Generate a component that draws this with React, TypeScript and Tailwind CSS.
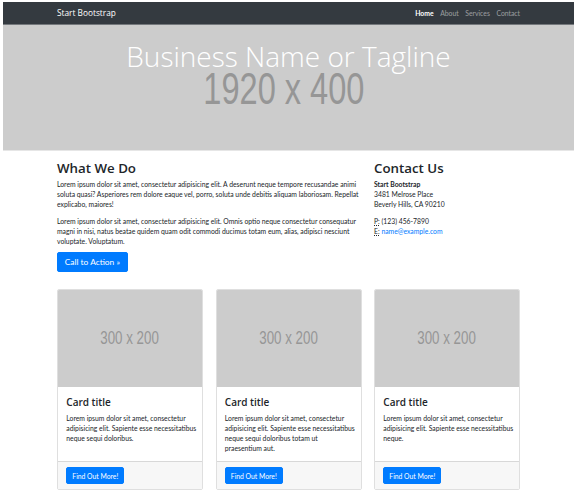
import React from "react";

const cards: string[][] = [
  ["Lorem ipsum dolor sit amet, consectetur", "adipisicing elit. Sapiente esse necessitatibus", "neque sequi doloribus."],
  ["Lorem ipsum dolor sit amet, consectetur", "adipisicing elit. Sapiente esse necessitatibus", "neque sequi doloribus totam ut", "praesentium aut."],
  ["Lorem ipsum dolor sit amet, consectetur", "adipisicing elit. Sapiente esse necessitatibus", "neque."],
];

const p1 = [
  "Lorem ipsum dolor sit amet, consectetur adipisicing elit. A deserunt neque tempore recusandae animi",
  "soluta quasi? Asperiores rem dolore eaque vel, porro, soluta unde debitis aliquam laboriosam. Repellat",
  "explicabo, maiores!",
];
const p2 = [
  "Lorem ipsum dolor sit amet, consectetur adipisicing elit. Omnis optio neque consectetur consequatur",
  "magni in nisi, natus beatae quidem quam odit commodi ducimus totam eum, alias, adipisci nesciunt",
  "voluptate. Voluptatum.",
];

export default function App() {
  return (
    <div className="min-h-[493px] bg-white font-['Lato',sans-serif] text-[#212529]">
      <div className="ml-[3px] pt-[2px] w-[571px]">
        <nav className="h-[23px] bg-[#343a40] border-b border-[#74787c]">
          <div className="mx-auto w-[463px] h-full flex items-center justify-between">
            <span className="font-['Open_Sans',sans-serif] text-[8.3px] text-white leading-none">Start Bootstrap</span>
            <ul className="flex text-[6.8px] leading-none -mr-[3.3px]">
              <li className="px-[3.3px] text-white font-bold">Home</li>
              <li className="px-[3.3px] text-white/50">About</li>
              <li className="px-[3.3px] text-white/50">Services</li>
              <li className="px-[3.3px] text-white/50">Contact</li>
            </ul>
          </div>
        </nav>
        <header className="h-[126px] bg-[#cccccc] border-b border-[#e6e6e6] flex flex-col items-center">
          <h1 className="mt-[17px] font-['Open_Sans',sans-serif] text-[28px] leading-[28px] font-light text-white">Business Name or Tagline</h1>
          <div className="mr-[10px] font-['Liberation_Sans',Arial,sans-serif] text-[44px] leading-[38px] text-[#969696] scale-x-[0.74]">1920 x 400</div>
        </header>
        <div className="mx-auto w-[463px]">
          <div className="flex gap-[12.5px] pt-[9px]">
            <div className="w-[304.5px]">
              <h2 className="font-['Open_Sans',sans-serif] text-[13.3px] leading-[16px] font-semibold mb-[3px]">What We Do</h2>
              <div className="text-[6.8px] leading-[10px] mb-[6.7px]">
                {p1.map((l, i) => (
                  <div key={i} className="whitespace-nowrap">{l}</div>
                ))}
              </div>
              <div className="text-[6.8px] leading-[10px] mb-[6.7px]">
                {p2.map((l, i) => (
                  <div key={i} className="whitespace-nowrap">{l}</div>
                ))}
              </div>
              <div className="flex">
                <a className="block bg-[#007bff] border border-[#007bff] text-white text-[8.4px] leading-[12.5px] px-[6.7px] py-[2.8px] rounded-[2px]">Call to Action »</a>
              </div>
            </div>
            <div className="w-[146px]">
              <h2 className="font-['Open_Sans',sans-serif] text-[13.3px] leading-[16px] font-semibold mb-[3px]">Contact Us</h2>
              <div className="text-[6.8px] leading-[10px] mb-[6.7px]">
                <div className="font-bold">Start Bootstrap</div>
                <div>3481 Melrose Place</div>
                <div>Beverly Hills, CA 90210</div>
              </div>
              <div className="text-[6.8px] leading-[10px]">
                <div><span className="underline decoration-dotted">P:</span> (123) 456-7890</div>
                <div><span className="underline decoration-dotted">E:</span> <span className="text-[#007bff]">name@example.com</span></div>
              </div>
            </div>
          </div>
          <div className="grid grid-cols-3 gap-[12.5px] mt-[17px]">
            {cards.map((lines, i) => (
              <div key={i} className="flex flex-col border border-black/[0.125] rounded-[2px] overflow-hidden">
                <div className="h-[97px] bg-[#cccccc] flex items-center justify-center">
                  <span className="font-['Liberation_Sans',Arial,sans-serif] text-[18px] text-[#969696] scale-x-[0.74]">300 x 200</span>
                </div>
                <div className="flex-1 p-[8.3px]">
                  <h4 className="font-['Open_Sans',sans-serif] text-[10px] leading-[12px] font-semibold mb-[5px]">Card title</h4>
                  <div className="text-[6.8px] leading-[10px]">
                    {lines.map((l, j) => (
                      <div key={j} className="whitespace-nowrap">{l}</div>
                    ))}
                  </div>
                </div>
                <div className="flex bg-[#f7f7f7] border-t border-black/[0.125] px-[8.3px] py-[5px]">
                  <a className="block bg-[#007bff] border border-[#007bff] text-white text-[6.8px] leading-[10px] px-[5px] py-[2.5px] rounded-[2px]">Find Out More!</a>
                </div>
              </div>
            ))}
          </div>
        </div>
      </div>
    </div>
  );
}
